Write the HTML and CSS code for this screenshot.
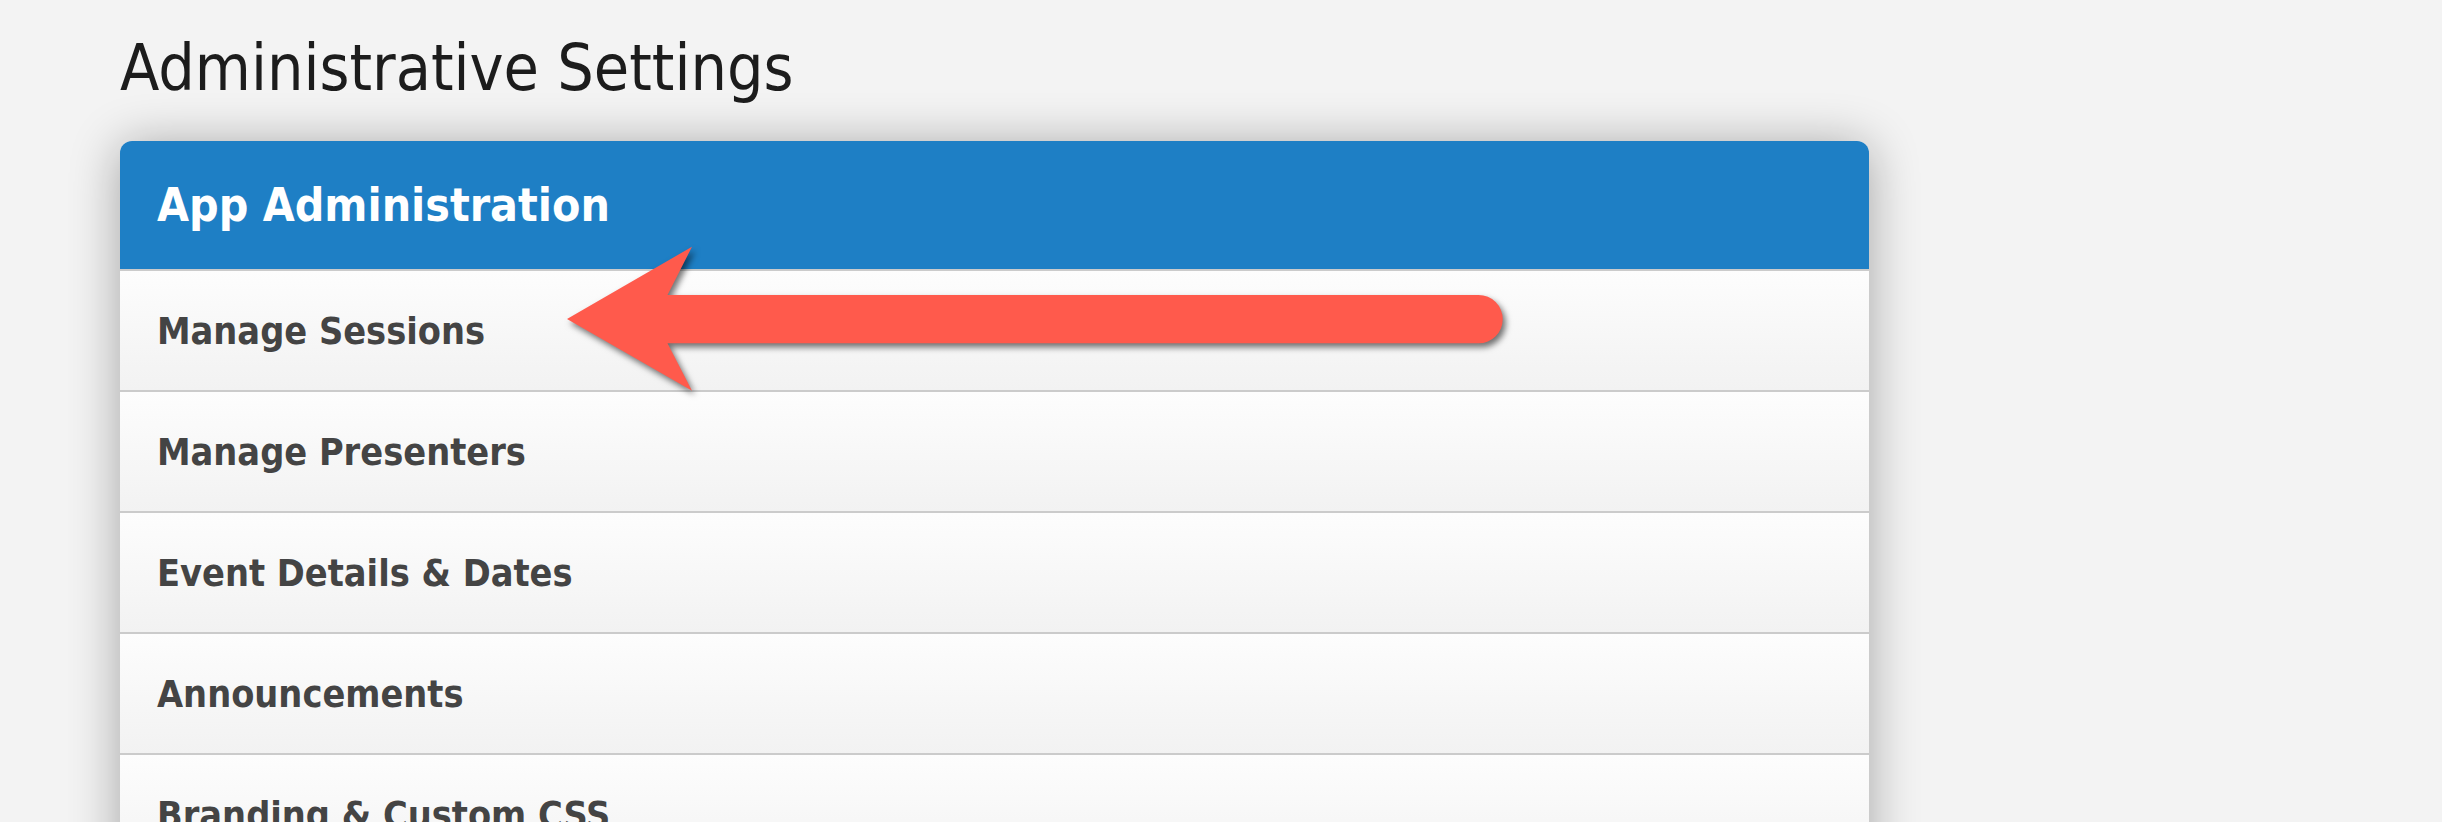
FILE: index.html
```html
<!DOCTYPE html>
<html lang="en">
<head>
<meta charset="utf-8">
<title>Administrative Settings</title>
<link rel="stylesheet" href="styles.css">
</head>
<body>
<div class="page">
  <h1 class="title">Administrative Settings</h1>
  <div class="card">
    <div class="card-header">App Administration</div>
    <ul class="menu">
      <li class="menu-item">Manage Sessions</li>
      <li class="menu-item">Manage Presenters</li>
      <li class="menu-item">Event Details &amp; Dates</li>
      <li class="menu-item">Announcements</li>
      <li class="menu-item">Branding &amp; Custom CSS</li>
    </ul>
  </div>
  <svg class="arrow" width="960" height="160" viewBox="0 0 960 160" aria-hidden="true">
    <path d="M7 79 L132 6.7 L107.5 55 L918.6 55 A24.15 24.15 0 0 1 918.6 103.3 L107.5 103.3 L132 150.7 Z" fill="#ff5a4c"/>
  </svg>
</div>
</body>
</html>
```
FILE: styles.css
```css
html, body {
  margin: 0;
  padding: 0;
  background: #f3f3f3;
  overflow: hidden;
}

.page {
  position: relative;
  padding: 37px 0 0 120px;
  font-family: "DejaVu Sans Condensed", "DejaVu Sans", sans-serif;
  font-stretch: condensed;
}

.title {
  margin: 0;
  font-size: 64px;
  line-height: 63px;
  font-weight: normal;
  color: #1c1c1c;
}

.card {
  margin-top: 41px;
  width: 1749px;
  border-radius: 12px 12px 0 0;
  box-shadow: 0 4px 50px rgba(0, 0, 0, 0.33);
  overflow: hidden;
}

.card-header {
  height: 128px;
  display: flex;
  align-items: center;
  padding-left: 37px;
  background: #1e7fc5;
  color: #ffffff;
  font-size: 46px;
  font-weight: bold;
}

.menu {
  list-style: none;
  margin: 0;
  padding: 0;
}

.menu-item {
  height: 119px;
  display: flex;
  align-items: center;
  padding-left: 37px;
  border-top: 2px solid #cbcbcb;
  background: linear-gradient(to bottom, #fdfdfd, #f2f2f2);
  color: #444444;
  font-size: 37.5px;
  font-weight: bold;
}

.arrow {
  position: absolute;
  left: 560px;
  top: 240px;
  filter: drop-shadow(3px 4px 3px rgba(0, 0, 0, 0.55));
}
```
